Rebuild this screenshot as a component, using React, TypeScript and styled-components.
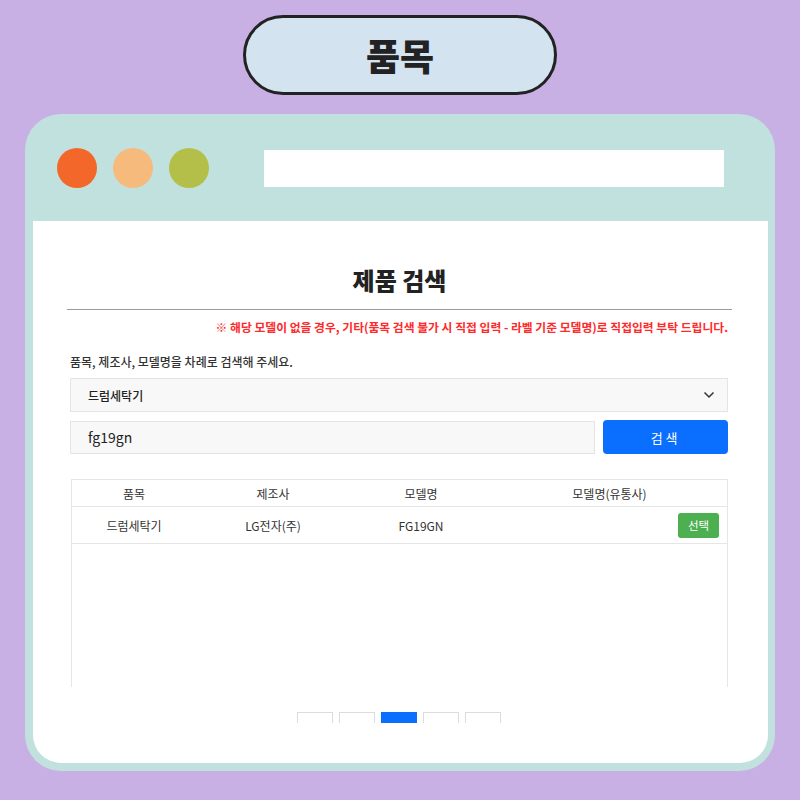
import React from "react";
import styled, { createGlobalStyle } from "styled-components";

const Global = createGlobalStyle`
  html, body { margin: 0; padding: 0; background: #c8b0e4; }
  body { font-family: "Noto Sans CJK KR", "Noto Sans", sans-serif; }
  * { box-sizing: border-box; }
`;

const Page = styled.div`
  width: 800px;
  height: 800px;
  display: flex;
  flex-direction: column;
  align-items: center;
  padding-top: 15px;
  background: #c8b0e4;
`;

const Pill = styled.div`
  width: 314px;
  height: 80px;
  border: 3px solid #222;
  border-radius: 40px;
  background: #d3e3f0;
  display: flex;
  align-items: center;
  justify-content: center;
  font-size: 37px;
  font-weight: 900;
  color: #222;
`;

const Window = styled.div`
  margin-top: 19px;
  width: 750px;
  height: 657px;
  background: #c1e1df;
  border-radius: 36px;
  padding: 0 7px 8px 8px;
  display: flex;
  flex-direction: column;
`;

const Header = styled.div`
  height: 107px;
  display: flex;
  align-items: center;
  padding-left: 24px;
  padding-top: 1px;
`;

const Dot = styled.div<{ $c: string }>`
  width: 40px;
  height: 40px;
  border-radius: 50%;
  background: ${(p) => p.$c};
  margin-right: 16px;
`;

const UrlBar = styled.div`
  margin-left: 39px;
  width: 460px;
  height: 37px;
  background: #fff;
`;

const Content = styled.div`
  flex: 1;
  background: #fff;
  border-radius: 0 0 28px 28px;
  padding: 0 36px 0 34px;
  display: flex;
  flex-direction: column;
  overflow: hidden;
`;

const Title = styled.h1`
  margin: 40px 0 0;
  height: 38px;
  line-height: 38px;
  text-align: center;
  font-size: 24px;
  font-weight: 900;
  color: #222;
`;

const Rule = styled.div`
  margin-top: 10px;
  height: 1px;
  background: #9a9a9a;
`;

const Notice = styled.p`
  margin: 8px 0 0;
  line-height: 18px;
  text-align: right;
  font-size: 11.8px;
  font-weight: 700;
  color: #ff2a2a;
  padding-right: 4px;
`;

const Form = styled.div`
  padding: 0 4px 0 3px;
  display: flex;
  flex-direction: column;
`;

const Hint = styled.p`
  margin: 17px 0 0;
  line-height: 18px;
  font-size: 12px;
  font-weight: 500;
  color: #333;
`;

const Select = styled.div`
  margin-top: 7px;
  height: 34px;
  border: 1px solid #e4e4e4;
  background: #f8f8f8;
  display: flex;
  align-items: center;
  justify-content: space-between;
  padding: 0 12px 0 17px;
  font-size: 12px;
  font-weight: 500;
  color: #222;
`;

const SearchRow = styled.div`
  margin-top: 8px;
  display: flex;
  gap: 8px;
  align-items: center;
`;

const Input = styled.div`
  width: 526px;
  height: 33px;
  border: 1px solid #e4e4e4;
  background: #f8f8f8;
  display: flex;
  align-items: center;
  padding-left: 17px;
  font-size: 14px;
  color: #222;
`;

const SearchButton = styled.button`
  width: 125px;
  height: 34px;
  border: none;
  border-radius: 4px;
  background: #0a6eff;
  color: #fff;
  font-family: inherit;
  font-size: 13px;
  letter-spacing: 3px;
`;

const TableBox = styled.div`
  margin: 25px 0 0 1px;
  height: 208px;
  border: 1px solid #e6e6e6;
  border-bottom: none;
  overflow: hidden;
`;

const Row = styled.div<{ $h: number }>`
  height: ${(p) => p.$h}px;
  display: grid;
  grid-template-columns: 124px 154px 142px 1fr;
  align-items: center;
  border-bottom: 1px solid #e6e6e6;
  font-size: 12px;
  font-weight: 400;
  color: #333;
`;

const Cell = styled.div<{ $align?: string }>`
  display: flex;
  justify-content: ${(p) => (p.$align === "right" ? "flex-end" : "center")};
  padding-right: ${(p) => (p.$align === "right" ? "8px" : "0")};
`;

const PickButton = styled.button`
  width: 41px;
  height: 25px;
  border: none;
  border-radius: 3px;
  background: #4caf50;
  color: #fff;
  font-family: inherit;
  font-size: 11.5px;
  padding: 0;
`;

const Pager = styled.div`
  margin-top: 25px;
  height: 11px;
  overflow: hidden;
  display: flex;
  justify-content: center;
  gap: 6px;
  padding-right: 1px;
`;

const PageBox = styled.div<{ $active?: boolean }>`
  width: 36px;
  height: 30px;
  border: 1px solid ${(p) => (p.$active ? "#0a6eff" : "#dcdcdc")};
  background: ${(p) => (p.$active ? "#0a6eff" : "#fff")};
`;

const Chevron = () => (
  <svg width="12" height="8" viewBox="0 0 12 8">
    <path d="M1.5 1.5 L6 6 L10.5 1.5" fill="none" stroke="#333" strokeWidth="1.5" />
  </svg>
);

export default function App() {
  return (
    <>
      <Global />
      <Page>
        <Pill>품목</Pill>
        <Window>
          <Header>
            <Dot $c="#f4672a" />
            <Dot $c="#f7ba7d" />
            <Dot $c="#b3bf48" />
            <UrlBar />
          </Header>
          <Content>
            <Title>제품 검색</Title>
            <Rule />
            <Notice>
              ※ 해당 모델이 없을 경우, 기타(품목 검색 불가 시 직접 입력 - 라벨 기준 모델명)로 직접입력 부탁 드립니다.
            </Notice>
            <Form>
              <Hint>품목, 제조사, 모델명을 차례로 검색해 주세요.</Hint>
              <Select>
                <span>드럼세탁기</span>
                <Chevron />
              </Select>
              <SearchRow>
                <Input>fg19gn</Input>
                <SearchButton>검색</SearchButton>
              </SearchRow>
              <TableBox>
                <Row $h={27}>
                  <Cell>품목</Cell>
                  <Cell>제조사</Cell>
                  <Cell>모델명</Cell>
                  <Cell>모델명(유통사)</Cell>
                </Row>
                <Row $h={37}>
                  <Cell>드럼세탁기</Cell>
                  <Cell>LG전자(주)</Cell>
                  <Cell>FG19GN</Cell>
                  <Cell $align="right">
                    <PickButton>선택</PickButton>
                  </Cell>
                </Row>
              </TableBox>
              <Pager>
                <PageBox />
                <PageBox />
                <PageBox $active />
                <PageBox />
                <PageBox />
              </Pager>
            </Form>
          </Content>
        </Window>
      </Page>
    </>
  );
}
